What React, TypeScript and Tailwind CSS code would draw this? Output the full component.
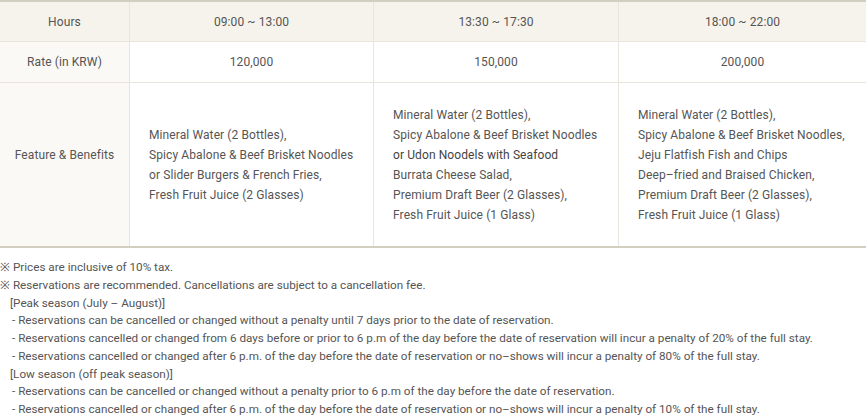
import React from "react";

const cols = [
  {
    hours: "09:00 ~ 13:00",
    rate: "120,000",
    items: [
      "Mineral Water (2 Bottles),",
      "Spicy Abalone & Beef Brisket Noodles",
      "or Slider Burgers & French Fries,",
      "Fresh Fruit Juice (2 Glasses)",
    ],
  },
  {
    hours: "13:30 ~ 17:30",
    rate: "150,000",
    items: [
      "Mineral Water (2 Bottles),",
      "Spicy Abalone & Beef Brisket Noodles",
      "or Udon Noodels with Seafood",
      "Burrata Cheese Salad,",
      "Premium Draft Beer (2 Glasses),",
      "Fresh Fruit Juice (1 Glass)",
    ],
  },
  {
    hours: "18:00 ~ 22:00",
    rate: "200,000",
    items: [
      "Mineral Water (2 Bottles),",
      "Spicy Abalone & Beef Brisket Noodles,",
      "Jeju Flatfish Fish and Chips",
      "Deep\u2013fried and Braised Chicken,",
      "Premium Draft Beer (2 Glasses),",
      "Fresh Fruit Juice (1 Glass)",
    ],
  },
];

export default function App() {
  return (
    <div
      className="w-[866px] h-[418px] bg-white text-[#555] text-[12px] overflow-hidden"
      style={{ fontFamily: "Roboto, 'Liberation Sans', sans-serif" }}
    >
      <div className="border-t-2 border-b-2 border-[#d3cfc0] tracking-[0.1px]">
        <div className="grid grid-cols-[130px_244px_245px_247px] h-[40px] bg-[#f5f3ec] border-b border-[#e8e5dc]">
          <div className="flex items-center justify-center border-r border-[#e8e5dc]">Hours</div>
          {cols.map((c, i) => (
            <div
              key={i}
              className={`flex items-center justify-center ${i < 2 ? "border-r border-[#e8e5dc]" : ""}`}
            >
              {c.hours}
            </div>
          ))}
        </div>
        <div className="grid grid-cols-[130px_244px_245px_247px] h-[41px] border-b border-[#e8e5dc]">
          <div className="flex items-center justify-center bg-[#faf9f5] border-r border-[#e8e5dc]">Rate (in KRW)</div>
          {cols.map((c, i) => (
            <div
              key={i}
              className={`flex items-center justify-center ${i < 2 ? "border-r border-[#e8e5dc]" : ""}`}
            >
              {c.rate}
            </div>
          ))}
        </div>
        <div className="grid grid-cols-[130px_244px_245px_247px] h-[163px]">
          <div className="flex items-center justify-center pb-[20px] bg-[#faf9f5] border-r border-[#e8e5dc]">Feature &amp; Benefits</div>
          {cols.map((c, i) => (
            <div
              key={i}
              className={`flex flex-col justify-center pl-[19px] leading-[20px] ${i < 2 ? "border-r border-[#e8e5dc]" : ""}`}
            >
              {c.items.map((t, j) => (
                <div key={j} className={i === 1 && j === 2 ? "text-[#444]" : ""}>
                  {t}
                </div>
              ))}
            </div>
          ))}
        </div>
      </div>
      <div className="pt-[11px] text-[11.7px] leading-[17.75px] text-[#555]">
        <div>※ Prices are inclusive of 10% tax.</div>
        <div>※ Reservations are recommended. Cancellations are subject to a cancellation fee.</div>
        <div className="pl-[10px]">[Peak season (July – August)]</div>
        <div className="pl-[12px]">- Reservations can be cancelled or changed without a penalty until 7 days prior to the date of reservation.</div>
        <div className="pl-[12px]">- Reservations cancelled or changed from 6 days before or prior to 6 p.m of the day before the date of reservation will incur a penalty of 20% of the full stay.</div>
        <div className="pl-[12px]">- Reservations cancelled or changed after 6 p.m. of the day before the date of reservation or no–shows will incur a penalty of 80% of the full stay.</div>
        <div className="pl-[10px]">[Low season (off peak season)]</div>
        <div className="pl-[12px]">- Reservations can be cancelled or changed without a penalty prior to 6 p.m of the day before the date of reservation.</div>
        <div className="pl-[12px]">- Reservations cancelled or changed after 6 p.m. of the day before the date of reservation or no–shows will incur a penalty of 10% of the full stay.</div>
      </div>
    </div>
  );
}
